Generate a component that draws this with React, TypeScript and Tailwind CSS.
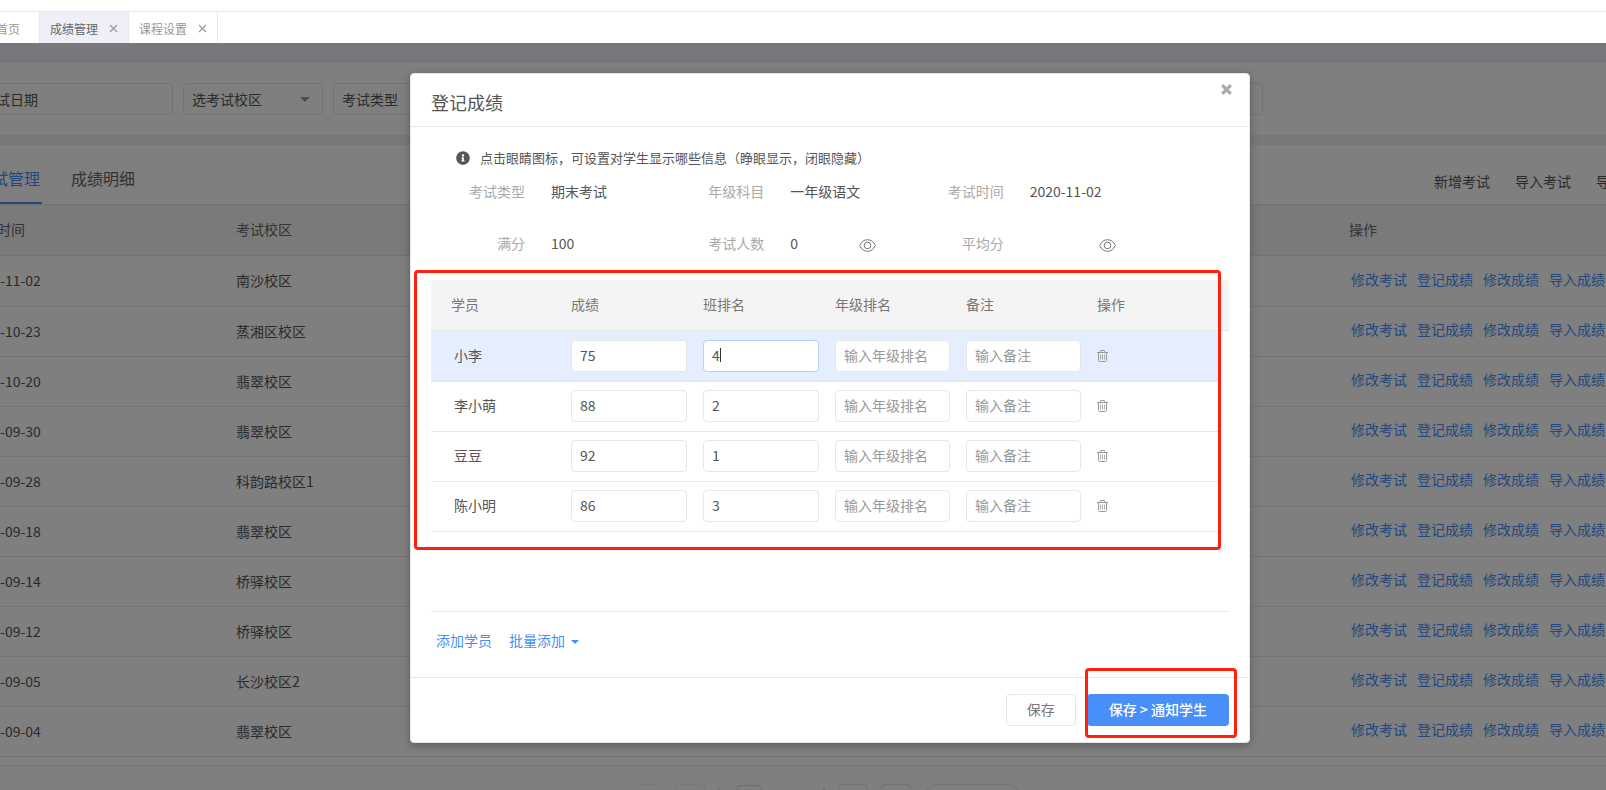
import clsx from "clsx";
import { FC } from "react";
import { FaInfoCircle } from "react-icons/fa";

interface Exam {
  date: string;
  campus: string;
}

interface Student {
  name: string;
  score: string;
  classRank: string;
  active?: boolean;
}

const exams: Exam[] = [
  { date: "2020-11-02", campus: "南沙校区" },
  { date: "2020-10-23", campus: "蒸湘区校区" },
  { date: "2020-10-20", campus: "翡翠校区" },
  { date: "2020-09-30", campus: "翡翠校区" },
  { date: "2020-09-28", campus: "科韵路校区1" },
  { date: "2020-09-18", campus: "翡翠校区" },
  { date: "2020-09-14", campus: "桥驿校区" },
  { date: "2020-09-12", campus: "桥驿校区" },
  { date: "2020-09-05", campus: "长沙校区2" },
  { date: "2020-09-04", campus: "翡翠校区" },
];

const students: Student[] = [
  { name: "小李", score: "75", classRank: "4", active: true },
  { name: "李小萌", score: "88", classRank: "2" },
  { name: "豆豆", score: "92", classRank: "1" },
  { name: "陈小明", score: "86", classRank: "3" },
];

const rowActions = ["修改考试", "登记成绩", "修改成绩", "导入成绩"];

const EyeIcon: FC = () => (
  <svg width="17" height="13" viewBox="0 0 17 13" fill="none" stroke="#777" strokeWidth="1">
    <path d="M0.7 6.5C2.3 2.6 5.2 0.7 8.5 0.7s6.2 1.9 7.8 5.8c-1.6 3.9-4.5 5.8-7.8 5.8S2.3 10.4 0.7 6.5Z" />
    <circle cx="8.5" cy="6.5" r="3.3" />
  </svg>
);

const TrashIcon: FC = () => (
  <svg width="11" height="12" viewBox="0 0 11 12" fill="none" stroke="#999" strokeWidth="1">
    <path d="M0 2.5h11" />
    <path d="M3 2.5L3.7 0.5h3.6L8 2.5" />
    <path d="M1.5 2.5v8c0 .6.4 1 1 1h6c.6 0 1-.4 1-1v-8" />
    <path d="M3.5 4.5v5M5.5 4.5v5M7.5 4.5v5" strokeWidth="0.8" />
  </svg>
);

const TabBar: FC = () => (
  <nav className="mt-[11px] flex h-8 shrink-0 border-t border-[#e8e8e8] text-xs text-[#999]">
    <a href="#home" className="-ml-1 flex w-11 items-center border-r border-[#e8e8e8] pt-[2px]">
      首页
    </a>
    {["成绩管理", "课程设置"].map((tab, i) => (
      <div
        key={tab}
        className={clsx(
          "flex w-[89px] items-center justify-between border-r border-[#e8e8e8] px-[10px] pt-[2px]",
          i === 0 && "bg-[#efeff8] text-[#666]"
        )}
      >
        <a href="#tab">{tab}</a>
        <button type="button" aria-label={`关闭${tab}`}>
          <svg width="9" height="9" viewBox="0 0 9 9" stroke="#999" strokeWidth="1.2">
            <path d="M1 1l7 7M8 1l-7 7" />
          </svg>
        </button>
      </div>
    ))}
  </nav>
);

const Filter: FC<{ label: string; className: string; caret?: boolean }> = ({
  label,
  className,
  caret,
}) => (
  <button
    type="button"
    className={clsx(
      "flex h-8 items-center justify-between rounded-sm border border-[#e6e6e6] pr-3 text-left",
      className
    )}
  >
    {label}
    {caret && (
      <span className="border-x-5 border-t-5 border-x-transparent border-t-[#999]"></span>
    )}
  </button>
);

const ExamTable: FC = () => (
  <table className="w-full table-fixed border-separate border-spacing-0 text-left">
    <colgroup>
      <col className="w-[267px]" />
      <col />
      <col className="w-[277px]" />
    </colgroup>
    <thead>
      <tr className="h-[51px] bg-[#f5f5f5] text-[#666]">
        {["考试时间", "考试校区", "操作"].map((title) => (
          <th key={title} className="border-b border-[#e6e6e6] pb-[2px] pl-5 font-normal">
            {title}
          </th>
        ))}
      </tr>
    </thead>
    <tbody>
      {exams.map((exam) => (
        <tr key={exam.date} className="h-[50px] first:h-[51px]">
          <td className="border-b border-[#e6e6e6] pb-[2px] pl-5">{exam.date}</td>
          <td className="border-b border-[#e6e6e6] pb-[2px] pl-5">{exam.campus}</td>
          <td className="border-b border-[#e6e6e6] pb-[5px] pl-[22px]">
            <div className="flex gap-[10px] whitespace-nowrap text-[#488ff9]">
              {rowActions.map((action) => (
                <a key={action} href="#action">
                  {action}
                </a>
              ))}
            </div>
          </td>
        </tr>
      ))}
    </tbody>
  </table>
);

const Pager: FC = () => (
  <div className="mt-2 flex justify-center border-t border-[#e6e6e6] pl-[98px] pt-[18px]">
    <div className="flex items-start gap-[13px]">
      <button type="button" aria-label="首页" className="h-7 w-[30px] rounded-sm border border-[#f2f2f2]"></button>
      <button type="button" aria-label="上一页" className="h-7 w-[30px] rounded-sm border border-[#f2f2f2]"></button>
      <span className="mt-1 h-5 w-[2px] bg-[#e0e0e0]"></span>
      <input aria-label="页码" defaultValue="1" className="ml-1 mr-12 mt-px h-7 w-[25px] rounded-sm border border-[#d8d8d8] text-center" />
      <span className="mt-1 h-5 w-[2px] bg-[#e0e0e0]"></span>
      <button type="button" aria-label="下一页" className="h-7 w-[30px] rounded-sm border border-[#e2e2e2]"></button>
      <button type="button" aria-label="末页" className="h-7 w-[30px] rounded-sm border border-[#e2e2e2]"></button>
      <button type="button" aria-label="每页条数" className="h-7 w-[97px] rounded-full border border-[#e2e2e2]"></button>
    </div>
  </div>
);

const Background: FC = () => (
  <div className="-ml-[51px] bg-[#efeff8] pt-5">
    <div className="flex gap-[10px] bg-white px-5 py-5">
      <Filter label="考试日期" className="w-[204px] pl-3" />
      <Filter label="选考试校区" className="w-[140px] pl-2" caret />
      <Filter label="考试类型" className="w-[140px] pl-2" caret />
      <Filter label="" className="w-[780px] pl-2" />
    </div>
    <div className="mt-[10px] bg-white">
      <div className="flex h-[60px] items-end justify-between border-b border-[#e6e6e6] pl-[27px]">
        <div className="flex h-full gap-[29px] text-base">
          <a href="#exams" className="flex items-center border-b-2 border-[#488ff9] pr-[2px] pt-2 text-[#488ff9]">
            考试管理
          </a>
          <a href="#details" className="flex items-center pt-[6px] text-[#666]">
            成绩明细
          </a>
        </div>
        <div className="flex w-[172px] gap-[25px] overflow-hidden whitespace-nowrap pb-[13px] text-[#555]">
          <a href="#add">新增考试</a>
          <a href="#import">导入考试</a>
          <a href="#export">导出考试</a>
        </div>
      </div>
      <ExamTable />
      <Pager />
    </div>
  </div>
);

const InfoItem: FC<{ label: string; value?: string; eye?: boolean }> = ({ label, value, eye }) => (
  <div className="flex h-5 items-center">
    <span className="w-20 text-right text-[#aaa]">{label}</span>
    <span className="ml-[26px] w-[69px] whitespace-nowrap text-[#555]">{value}</span>
    {eye && (
      <button type="button" aria-label={`显示${label}`} className="pt-1">
        <EyeIcon />
      </button>
    )}
  </div>
);

const inputClass =
  "block h-8 w-full rounded-sm border bg-white px-2 pb-[2px] text-[#555] outline-none placeholder:text-[#999]";

const StudentRow: FC<{ student: Student }> = ({ student: { name, score, classRank, active } }) => {
  const cell = clsx(
    "border-b border-[#e6e6e6] pb-[9px] pr-2",
    active ? "bg-[#e5eefe] pt-[9px]" : "pt-2"
  );

  return (
    <tr>
      <td className={clsx(cell, "pl-[23px]")}>
        <span className="block pb-[2px]">{name}</span>
      </td>
      <td className={clsx(cell, "pl-2")}>
        <input aria-label={`${name}成绩`} defaultValue={score} className={clsx(inputClass, "border-[#e6e6e6]")} />
      </td>
      <td className={clsx(cell, "pl-2")}>
        <div className="relative">
          <input
            aria-label={`${name}班排名`}
            defaultValue={classRank}
            className={clsx(inputClass, active ? "border-[#b5d2fd]" : "border-[#e6e6e6]")}
          />
          {active && <span className="absolute left-[17px] top-2 h-[14px] w-px bg-[#333]"></span>}
        </div>
      </td>
      <td className={clsx(cell, "pl-2")}>
        <input aria-label={`${name}年级排名`} placeholder="输入年级排名" className={clsx(inputClass, "border-[#e6e6e6]")} />
      </td>
      <td className={clsx(cell, "pl-2")}>
        <input aria-label={`${name}备注`} placeholder="输入备注" className={clsx(inputClass, "border-[#e6e6e6]")} />
      </td>
      <td className={clsx(cell, "pl-2")}>
        <button type="button" aria-label={`删除${name}`} className="flex">
          <TrashIcon />
        </button>
      </td>
      <td></td>
    </tr>
  );
};

const StudentTable: FC = () => (
  <div className="relative mt-[27px] min-h-[332px] border-b border-[#e6e6e6]">
    <table className="w-full table-fixed border-separate border-spacing-0 text-left text-[#555]">
      <colgroup>
        <col className="w-[132px]" />
        <col className="w-[132px]" />
        <col className="w-[132px]" />
        <col className="w-[131px]" />
        <col className="w-[131px]" />
        <col />
        <col className="w-[10px]" />
      </colgroup>
      <thead>
        <tr className="h-[51px] text-[#777]">
          <th className="rounded-tl-sm border-b border-[#e6e6e6] bg-[#f4f4f4] pb-[2px] pl-5 font-normal">学员</th>
          {["成绩", "班排名", "年级排名", "备注", "操作"].map((title) => (
            <th key={title} className="border-b border-[#e6e6e6] bg-[#f4f4f4] px-2 pb-[2px] font-normal">
              {title}
            </th>
          ))}
          <th className="rounded-tr-sm border-b border-[#e6e6e6] bg-[#f4f4f4]"></th>
        </tr>
      </thead>
      <tbody>
        {students.map((student) => (
          <StudentRow key={student.name} student={student} />
        ))}
      </tbody>
    </table>
    <div className="pointer-events-none absolute -left-[17px] -top-[10px] bottom-[61px] right-2 rounded-sm border-3 border-[#ff2010]"></div>
  </div>
);

const ScoreDialog: FC = () => (
  <section
    role="dialog"
    aria-labelledby="dialog-title"
    className="relative w-[840px] rounded-sm border border-[#e6e6e6] bg-white shadow-[0_2px_8px_rgba(0,0,0,0.3)]"
  >
    <header className="flex h-[53px] items-center border-b border-[#e6e6e6] px-5 pt-1">
      <h2 id="dialog-title" className="text-lg text-[#555]">
        登记成绩
      </h2>
      <button type="button" aria-label="关闭" className="absolute right-[17px] top-[10px]">
        <svg width="11" height="11" viewBox="0 0 11 11" stroke="#aaa" strokeWidth="3.2">
          <path d="M1.2 1.2l8.6 8.6M9.8 1.2L1.2 9.8" />
        </svg>
      </button>
    </header>

    <div className="px-5 pt-[21px]">
      <p className="flex h-5 items-center gap-[10px] pl-[25px] text-[13px] text-[#555]">
        <FaInfoCircle size={14} />
        点击眼睛图标，可设置对学生显示哪些信息（睁眼显示，闭眼隐藏）
      </p>
      <div className="mt-[13px] grid grid-cols-3 gap-y-8 pl-[14px] pr-[66px]">
        <InfoItem label="考试类型" value="期末考试" />
        <InfoItem label="年级科目" value="一年级语文" />
        <InfoItem label="考试时间" value="2020-11-02" />
        <InfoItem label="满分" value="100" />
        <InfoItem label="考试人数" value="0" eye />
        <InfoItem label="平均分" eye />
      </div>
      <StudentTable />
      <div className="flex gap-[17px] pb-[27px] pl-[5px] pt-[18px] leading-5 text-[#488ff9]">
        <button type="button">添加学员</button>
        <button type="button" className="flex items-center gap-[6px]">
          批量添加
          <span className="mt-1 border-x-4 border-t-4 border-x-transparent border-t-[#488ff9]"></span>
        </button>
      </div>
    </div>

    <footer className="flex justify-end gap-[11px] border-t border-[#e6e6e6] px-5 py-4">
      <button type="button" className="h-8 rounded-sm border border-[#e6e6e6] px-5 pb-[2px] text-[#777]">
        保存
      </button>
      <div className="relative">
        <button type="button" className="h-8 rounded-sm bg-[#488ff9] px-[22px] pb-[2px] font-medium text-white">
          保存 &gt; 通知学生
        </button>
        <div className="pointer-events-none absolute -bottom-3 -left-[2px] -right-2 -top-[26px] rounded-sm border-3 border-[#ff2010]"></div>
      </div>
    </footer>
  </section>
);

export default function App() {
  return (
    <div className="flex h-screen flex-col overflow-hidden bg-white font-['Noto_Sans_CJK_SC',sans-serif] text-sm text-[#555]">
      <TabBar />
      <main className="relative flex-1 overflow-hidden">
        <Background />
        <div className="absolute inset-0 flex items-start justify-center bg-black/50 pl-[54px] pt-[30px]">
          <ScoreDialog />
        </div>
      </main>
    </div>
  );
}
